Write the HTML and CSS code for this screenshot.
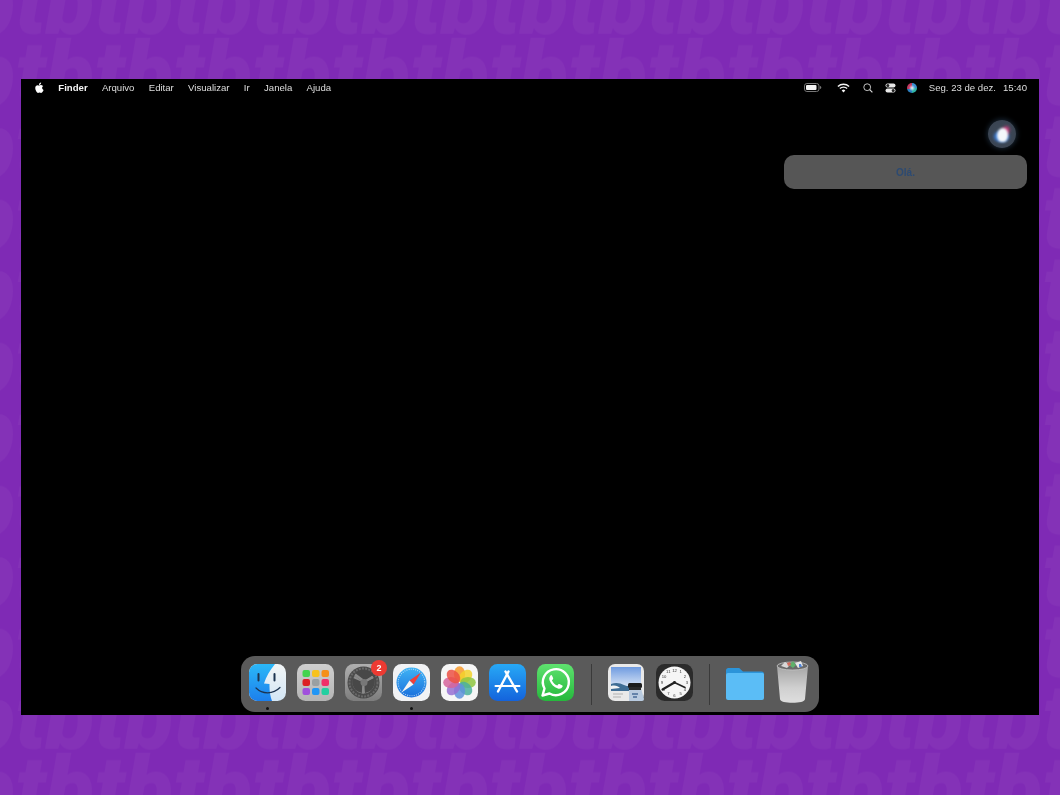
FILE: index.html
```html
<!DOCTYPE html>
<html lang="pt-BR">
<head>
<meta charset="utf-8">
<title>Siri</title>
<link rel="stylesheet" href="styles.css">
</head>
<body>
<svg class="wallpaper" width="1060" height="795" aria-hidden="true">
  <defs>
    <pattern id="tb" width="79" height="71.500" patternUnits="userSpaceOnUse">
      <text class="wp-text" x="-64" y="33.500">tbtbtb</text>
      <text class="wp-text" x="-64" y="105">tbtbtb</text>
    </pattern>
  </defs>
  <rect width="1060" height="795" fill="url(#tb)"/>
</svg>
<main class="screen">
  <header class="menubar">
    <nav class="menu-left">
      <svg class="apple" viewBox="0 0 20 24" width="9" height="11"><path fill="#fff" d="M13.6 1c.1 1.500-.5 2.800-1.300 3.800-.9 1-2.200 1.700-3.500 1.600-.2-1.400.5-2.800 1.200-3.700C10.900 1.700 12.400 1 13.600 1zM18.400 8.400c-1.800 1.100-2.600 2.600-2.600 4.400 0 2.200 1.300 3.700 3.200 4.500-.5 1.500-1.200 2.900-2.100 4.200-1 1.300-1.900 2.500-3.300 2.500s-1.900-.8-3.500-.8-2.200.8-3.500.8-2.300-1.200-3.300-2.600C1.400 18.500.500 15.700.500 13.100c0-4.100 2.700-6.300 5.300-6.300 1.400 0 2.600.9 3.500.9s2.200-1 3.800-1c1.300 0 3.400.4 4.800 1.700z"/></svg>
      <span class="menu-app">Finder</span>
      <span>Arquivo</span>
      <span>Editar</span>
      <span>Visualizar</span>
      <span>Ir</span>
      <span>Janela</span>
      <span>Ajuda</span>
    </nav>
    <div class="menu-right">
      <svg class="st-battery" viewBox="0 0 18 9" width="18" height="9"><rect x=".5" y=".5" width="14.500" height="8" rx="2.400" fill="none" stroke="#777"/><rect x="2" y="2" width="10.500" height="5" rx="1" fill="#f2f2f2"/><path d="M16 3v3c.8-.2 1.300-.8 1.300-1.500S16.800 3.200 16 3z" fill="#777"/></svg>
      <svg class="st-wifi" viewBox="0 0 13 10" width="13" height="10"><g fill="none" stroke="#f4f4f4" stroke-width="1.400"><path d="M.9 3.500a8 8 0 0 1 11.200 0"/><path d="M2.900 5.600a5.100 5.100 0 0 1 7.200 0"/></g><path d="M4.700 7.400a2.600 2.600 0 0 1 3.600 0L6.500 9.500z" fill="#f4f4f4"/></svg>
      <svg class="st-search" viewBox="0 0 10 10" width="10" height="10"><circle cx="4.200" cy="4.200" r="3.400" fill="none" stroke="#d8d8d8" stroke-width=".9"/><path d="M6.700 6.700 9.400 9.400" stroke="#d8d8d8" stroke-width="1.200"/></svg>
      <svg class="st-control" viewBox="0 0 11 10" width="11" height="10"><rect x=".5" y=".5" width="10" height="4" rx="2" fill="#e8e8e8"/><rect x=".5" y="5.500" width="10" height="4" rx="2" fill="#e8e8e8"/><circle cx="2.800" cy="2.500" r="1.500" fill="#222"/><circle cx="8.200" cy="7.500" r="1.500" fill="#222"/></svg>
      <span class="st-siri"></span>
      <span class="st-date">Seg. 23 de dez.</span>
      <span class="st-time">15:40</span>
    </div>
  </header>

  <section class="siri-panel">
    <div class="siri-orb"><span class="orb-blue"></span><span class="orb-red"></span><span class="orb-core"></span></div>
    <div class="siri-bubble">Olá.</div>
  </section>

  <footer class="dock">
    <div class="dock-item running">
      <svg viewBox="0 0 37 37" class="icon">
        <defs><linearGradient id="f1" x1="0" y1="0" x2="0" y2="1"><stop offset="0" stop-color="#2bb8f8"/><stop offset="1" stop-color="#1c7fec"/></linearGradient><linearGradient id="f2" x1="0" y1="0" x2="0" y2="1"><stop offset="0" stop-color="#f2f5f6"/><stop offset="1" stop-color="#d3e6f5"/></linearGradient></defs>
        <rect width="37" height="37" rx="8.500" fill="url(#f2)"/>
        <path d="M8.500 0H26C21 6 17 13 15 19.500l5.500.5c-.2 6 .6 12 2.500 17H8.500A8.500 8.500 0 0 1 0 28.500v-20A8.500 8.500 0 0 1 8.500 0z" fill="url(#f1)"/>
        <path d="M9.500 10v6.500M25.500 10v6.500" stroke="#1d3450" stroke-width="2" stroke-linecap="round"/>
        <path d="M7 24c6.500 6.500 17 6.500 24-.5" fill="none" stroke="#1d3450" stroke-width="1.200" stroke-linecap="round"/>
      </svg>
    </div>
    <div class="dock-item">
      <svg viewBox="0 0 37 37" class="icon">
        <defs><linearGradient id="lp" x1="0" y1="0" x2="0" y2="1"><stop offset="0" stop-color="#cfcfcf"/><stop offset="1" stop-color="#b4b4b4"/></linearGradient></defs>
        <rect width="37" height="37" rx="8.500" fill="url(#lp)"/>
        <rect x="5.500" y="6" width="7.500" height="7" rx="2" fill="#44d34e"/><rect x="15" y="6" width="7.500" height="7" rx="2" fill="#f7c21e"/><rect x="24.500" y="6" width="7.500" height="7" rx="2" fill="#f58f18"/>
        <rect x="5.500" y="15" width="7.500" height="7" rx="2" fill="#dc1f24"/><rect x="15" y="15" width="7.500" height="7" rx="2" fill="#9aa0a2"/><rect x="24.500" y="15" width="7.500" height="7" rx="2" fill="#f02f68"/>
        <rect x="5.500" y="24" width="7.500" height="7" rx="2" fill="#a04fdc"/><rect x="15" y="24" width="7.500" height="7" rx="2" fill="#2196f5"/><rect x="24.500" y="24" width="7.500" height="7" rx="2" fill="#22cfa0"/>
      </svg>
    </div>
    <div class="dock-item">
      <svg viewBox="0 0 37 37" class="icon">
        <defs><linearGradient id="s1" x1="0" y1="0" x2="0" y2="1"><stop offset="0" stop-color="#b0b0b0"/><stop offset="1" stop-color="#7d7d7d"/></linearGradient></defs>
        <rect width="37" height="37" rx="8.500" fill="url(#s1)"/>
        <circle cx="18.500" cy="18.500" r="16" fill="#4a4a4a"/>
        <circle cx="18.500" cy="18.500" r="14" fill="none" stroke="#6a6a6a" stroke-width="2" stroke-dasharray="2 1.200"/>
        <circle cx="18.500" cy="18.500" r="11" fill="#8a8a8a"/>
        <path d="M18.500 18.500 9 11a12 12 0 0 1 19 0zM18.500 18.500 29 14a11 11 0 0 1-9 15zM18.500 18.500 17 29a11 11 0 0 1-9-15z" fill="#484848"/>
        <path d="M20 18 10 10.500M19 18 28 13M18.500 19 18 29.500" stroke="#8a8a8a" stroke-width="2.400"/>
        <circle cx="19" cy="18.500" r="3.500" fill="#777"/>
      </svg>
      <span class="badge">2</span>
    </div>
    <div class="dock-item running">
      <svg viewBox="0 0 37 37" class="icon">
        <defs><linearGradient id="sf" x1="0" y1="0" x2="0" y2="1"><stop offset="0" stop-color="#3fb4f5"/><stop offset="1" stop-color="#1a6fdc"/></linearGradient></defs>
        <rect width="37" height="37" rx="8.500" fill="#f1f2f4"/>
        <circle cx="18.500" cy="18.500" r="15" fill="url(#sf)"/>
        <circle cx="18.500" cy="18.500" r="13.300" fill="none" stroke="#cfe6fa" stroke-width="1.100" stroke-dasharray=".8 1.400"/>
        <path d="M28 8.500 16.500 16.500 20.500 20.500z" fill="#f0403a"/>
        <path d="M8.500 28.500 16.500 16.500 20.500 20.500z" fill="#f4f4f4"/>
      </svg>
    </div>
    <div class="dock-item">
      <svg viewBox="0 0 37 37" class="icon">
        <rect width="37" height="37" rx="8.500" fill="#f6f6f6"/>
        <g class="petals">
          <ellipse cx="18.500" cy="10" rx="5.600" ry="7.800" fill="#f79a2c" opacity=".85"/>
          <ellipse cx="18.500" cy="10" rx="5.600" ry="7.800" fill="#f3d22c" opacity=".85" transform="rotate(45 18.500 18.500)"/>
          <ellipse cx="18.500" cy="10" rx="5.600" ry="7.800" fill="#8fc640" opacity=".85" transform="rotate(90 18.500 18.500)"/>
          <ellipse cx="18.500" cy="10" rx="5.600" ry="7.800" fill="#4bb09e" opacity=".85" transform="rotate(135 18.500 18.500)"/>
          <ellipse cx="18.500" cy="10" rx="5.600" ry="7.800" fill="#5f92dc" opacity=".85" transform="rotate(180 18.500 18.500)"/>
          <ellipse cx="18.500" cy="10" rx="5.600" ry="7.800" fill="#9670d2" opacity=".85" transform="rotate(225 18.500 18.500)"/>
          <ellipse cx="18.500" cy="10" rx="5.600" ry="7.800" fill="#d6649c" opacity=".85" transform="rotate(270 18.500 18.500)"/>
          <ellipse cx="18.500" cy="10" rx="5.600" ry="7.800" fill="#ec5144" opacity=".85" transform="rotate(315 18.500 18.500)"/>
        </g>
      </svg>
    </div>
    <div class="dock-item">
      <svg viewBox="0 0 37 37" class="icon">
        <defs><linearGradient id="ap" x1="0" y1="0" x2="0" y2="1"><stop offset="0" stop-color="#27a9f6"/><stop offset="1" stop-color="#1463dc"/></linearGradient></defs>
        <rect width="37" height="37" rx="8.500" fill="url(#ap)"/>
        <g stroke="#fff" stroke-linecap="round" fill="none">
          <path d="M19.500 7.500 9 27.500" stroke-width="2.400"/>
          <path d="M16.500 7.500 28 27.500" stroke-width="2.400"/>
          <path d="M6.500 22h24" stroke-width="2"/>
        </g>
      </svg>
    </div>
    <div class="dock-item">
      <svg viewBox="0 0 37 37" class="icon">
        <defs><linearGradient id="wa" x1="0" y1="0" x2="0" y2="1"><stop offset="0" stop-color="#5fe26f"/><stop offset="1" stop-color="#25b83c"/></linearGradient></defs>
        <rect width="37" height="37" rx="8.500" fill="url(#wa)"/>
        <path d="M5.500 31.500 7.500 24.500a13 13 0 1 1 5 5z" fill="none" stroke="#fff" stroke-width="2.400" stroke-linejoin="round"/>
        <path d="M14 11.500c-1.500 1-2.200 2.700-1.500 4.700 1.500 4 4.500 7 8.400 8.300 2 .6 3.800-.2 4.600-1.700.4-.7.100-1.200-.6-1.500l-2.500-1.200c-.5-.2-.8-.1-1.200.4l-.9 1.100c-2.600-1-4.300-2.700-5.400-5.300l.9-.9c.4-.4.500-.8.300-1.300l-1-2.400c-.3-.7-1.200-.9-1.900-.2z" fill="#fff"/>
      </svg>
    </div>
    <span class="dock-sep"></span>
    <div class="dock-item">
      <svg viewBox="0 0 37 37" class="icon">
        <defs><linearGradient id="pv" x1="0" y1="0" x2="0" y2="1"><stop offset="0" stop-color="#6f9be0"/><stop offset="1" stop-color="#dfe9f7"/></linearGradient></defs>
        <rect width="36" height="37" rx="7" fill="#e9e9e9"/>
        <rect x="3" y="3" width="30" height="21" fill="url(#pv)"/>
        <path d="M3 20c5-2 9-1 13 1s10 1 17 0v6H3z" fill="#3f6d94"/>
        <path d="M3 22c4-1 7 0 9 2l-9 1z" fill="#f4f4f4"/>
        <rect x="20" y="19" width="14" height="5" rx="1.500" fill="#1c1c1c"/>
        <path d="M21 24h12l3 11a2 2 0 0 1-2 2H21z" fill="#b9cbe0"/>
        <rect x="21" y="23" width="12" height="3" fill="#2a2a2a"/>
        <path d="M24 30h6M25 33h4" stroke="#4a6d99" stroke-width="1.300"/>
        <path d="M5 30h10M5 33h8" stroke="#c3c3c3" stroke-width="1.300"/>
      </svg>
    </div>
    <div class="dock-item">
      <svg viewBox="0 0 37 37" class="icon">
        <rect width="37" height="37" rx="8.500" fill="#2b2b2b"/>
        <circle cx="18.500" cy="18.500" r="16" fill="#f6f6f6"/>
        <g class="clock-nums">
          <text x="18.500" y="7.500">12</text><text x="24.700" y="9">1</text><text x="29" y="13.500">2</text><text x="31" y="20">3</text><text x="29" y="26.500">4</text><text x="24.700" y="31">5</text><text x="18.500" y="33">6</text><text x="12.300" y="31">7</text><text x="8" y="26.500">8</text><text x="6" y="20">9</text><text x="8" y="13.500">10</text><text x="12.300" y="9">11</text>
        </g>
        <path d="M18.500 18.500 29 23.500" stroke="#222" stroke-width="1.600" stroke-linecap="round"/>
        <path d="M18.500 18.500 6.500 25.500" stroke="#222" stroke-width="2.200" stroke-linecap="round"/>
        <circle cx="18.500" cy="18.500" r="1.400" fill="#222"/>
      </svg>
    </div>
    <span class="dock-sep dock-sep-last"></span>
    <div class="dock-item folder">
      <svg viewBox="0 0 39 37" class="icon-wide">
        <path d="M0 9.500V6.500A2.500 2.500 0 0 1 2.500 4H12c1.300 0 1.900.5 2.700 1.400L17 7.500h18.500A2.500 2.500 0 0 1 38 10v2H0z" fill="#2c94d9"/>
        <path d="M0 11A2 2 0 0 1 2 9h34.500a1.500 1.500 0 0 1 1.500 1.500V34a2 2 0 0 1-2 2H2a2 2 0 0 1-2-2z" fill="#5bbdf6"/>
      </svg>
    </div>
    <div class="dock-item">
      <svg viewBox="0 0 37 43" class="icon-trash">
        <defs><linearGradient id="tr" x1="0" y1="0" x2="0" y2="1"><stop offset="0" stop-color="#a4a4a4"/><stop offset=".6" stop-color="#d0d0d0"/><stop offset="1" stop-color="#dedede"/></linearGradient></defs>
        <path d="M1 6c8 3.500 23 3.500 31 0l-3 33c-.2 2.800-6 3.700-12.500 3.700S4.200 41.800 4 39z" fill="url(#tr)"/>
        <ellipse cx="16.500" cy="6" rx="15.500" ry="4" fill="#6a6a6a" stroke="#c8c8c8" stroke-width=".8"/>
        <path d="M5 6l4-4 5 3-3 3z" fill="#d8d8d8"/><path d="M13 5l4-4 3 4-3 3z" fill="#5fb06a"/><path d="M19 3l6-2 2 5-5 2z" fill="#e6e6e6"/><path d="M11 3l3-1 1 3-3 1z" fill="#d46a5c"/><path d="M23 4l2 0 1 3-3 0z" fill="#4f84d8"/>
      </svg>
    </div>
  </footer>
</main>
</body>
</html>
```
FILE: styles.css
```css
html, body {
  margin: 0;
  padding: 0;
}
body {
  position: relative;
  width: 1060px;
  height: 795px;
  overflow: hidden;
  background: #7f2ab5;
  box-sizing: border-box;
  padding: 79px 21px 80px;
  font-family: "Liberation Sans", Arial, sans-serif;
}
.wallpaper {
  position: absolute;
  top: 0;
  left: 0;
}
.wp-text {
  font-family: Roboto, sans-serif;
  font-style: italic;
  font-weight: 900;
  font-size: 90px;
  letter-spacing: .12px;
  fill: #8432b7;
}
.screen {
  position: relative;
  height: 636px;
  background: #000;
  display: flex;
  flex-direction: column;
  color: #e8e8e8;
  filter: blur(0.4px);
}
.menubar {
  display: flex;
  justify-content: space-between;
  align-items: center;
  height: 17px;
  padding: 0 12px 1px 14px;
  font-size: 9.600px;
  color: #dedede;
}
.menu-left {
  display: flex;
  align-items: center;
  gap: 14.300px;
}
.menu-app {
  font-weight: 700;
  color: #f4f4f4;
}
.menu-right {
  display: flex;
  align-items: center;
}
.st-battery { margin-right: 15px; }
.st-wifi { margin-right: 13px; }
.st-search { margin-right: 12px; }
.st-control { margin-right: 11px; }
.st-siri {
  width: 10px;
  height: 10px;
  border-radius: 50%;
  margin-right: 12px;
  background:
    radial-gradient(circle at 50% 50%, #f0f0f5 0, rgba(240, 240, 245, 0) 45%),
    conic-gradient(#3a8fd0 0 25%, #2fb3a8 25% 50%, #2c7fc0 50% 70%, #c23a63 70%);
}
.st-date { margin-right: 7px; }
.siri-panel {
  display: flex;
  flex-direction: column;
  align-items: flex-end;
  padding: 23px 12px 0 0;
}
.siri-orb {
  position: relative;
  width: 28px;
  height: 28px;
  border-radius: 50%;
  margin: 0 11px 7px 0;
  background: radial-gradient(circle, #3d4a5a 0, #3a4452 70%, #2a3038 100%);
  box-shadow: 0 0 5px 1px rgba(70, 110, 150, .35);
  overflow: hidden;
}
.orb-blue, .orb-red, .orb-core {
  position: absolute;
  display: block;
  border-radius: 50%;
}
.orb-blue {
  left: 6px; top: 11px; width: 15px; height: 11px;
  background: #3f7fd8;
  filter: blur(1.500px);
}
.orb-red {
  left: 14px; top: 6px; width: 7px; height: 10px;
  background: #c83a7a;
  filter: blur(1.500px);
  transform: rotate(25deg);
}
.orb-core {
  left: 9px; top: 8px; width: 11px; height: 14px;
  background: #f4f7fb;
  border-radius: 60% 50% 50% 50%;
  filter: blur(1px);
}
.siri-bubble {
  width: 243px;
  height: 34px;
  border-radius: 10px;
  background: #565656;
  color: #2c4a72;
  font-size: 10px;
  font-weight: 700;
  display: flex;
  align-items: center;
  justify-content: center;
}
.dock {
  margin: auto auto 3px;
  height: 56px;
  box-sizing: border-box;
  padding: 8px 8px 0;
  width: 578px;
  background: #5a5a5a;
  border-radius: 14px;
  display: flex;
  align-items: flex-start;
  gap: 11px;
}
.dock-item {
  position: relative;
  width: 37px;
  height: 37px;
  flex: none;
}
.dock-item.folder {
  width: 39px;
}
.icon, .icon-wide, .icon-trash {
  display: block;
  width: 100%;
  height: 100%;
}
.icon-trash {
  height: 43px;
  margin-top: -4px;
}
.running::after {
  content: "";
  position: absolute;
  left: 17px;
  top: 43px;
  width: 3px;
  height: 3px;
  border-radius: 50%;
  background: #111;
}
.badge {
  position: absolute;
  left: 26px;
  top: -4px;
  width: 16px;
  height: 16px;
  border-radius: 50%;
  background: #ee3a32;
  color: #fff;
  font-size: 9px;
  font-weight: 700;
  line-height: 16px;
  text-align: center;
}
.dock-sep {
  flex: none;
  width: 1px;
  height: 41px;
  background: #3a3a3a;
  margin: 0 5px 0 6px;
}
.dock-sep-last {
  margin-left: 5px;
}
.clock-nums text {
  font-family: "Liberation Sans", sans-serif;
  font-size: 4.200px;
  fill: #333;
  text-anchor: middle;
}
```
